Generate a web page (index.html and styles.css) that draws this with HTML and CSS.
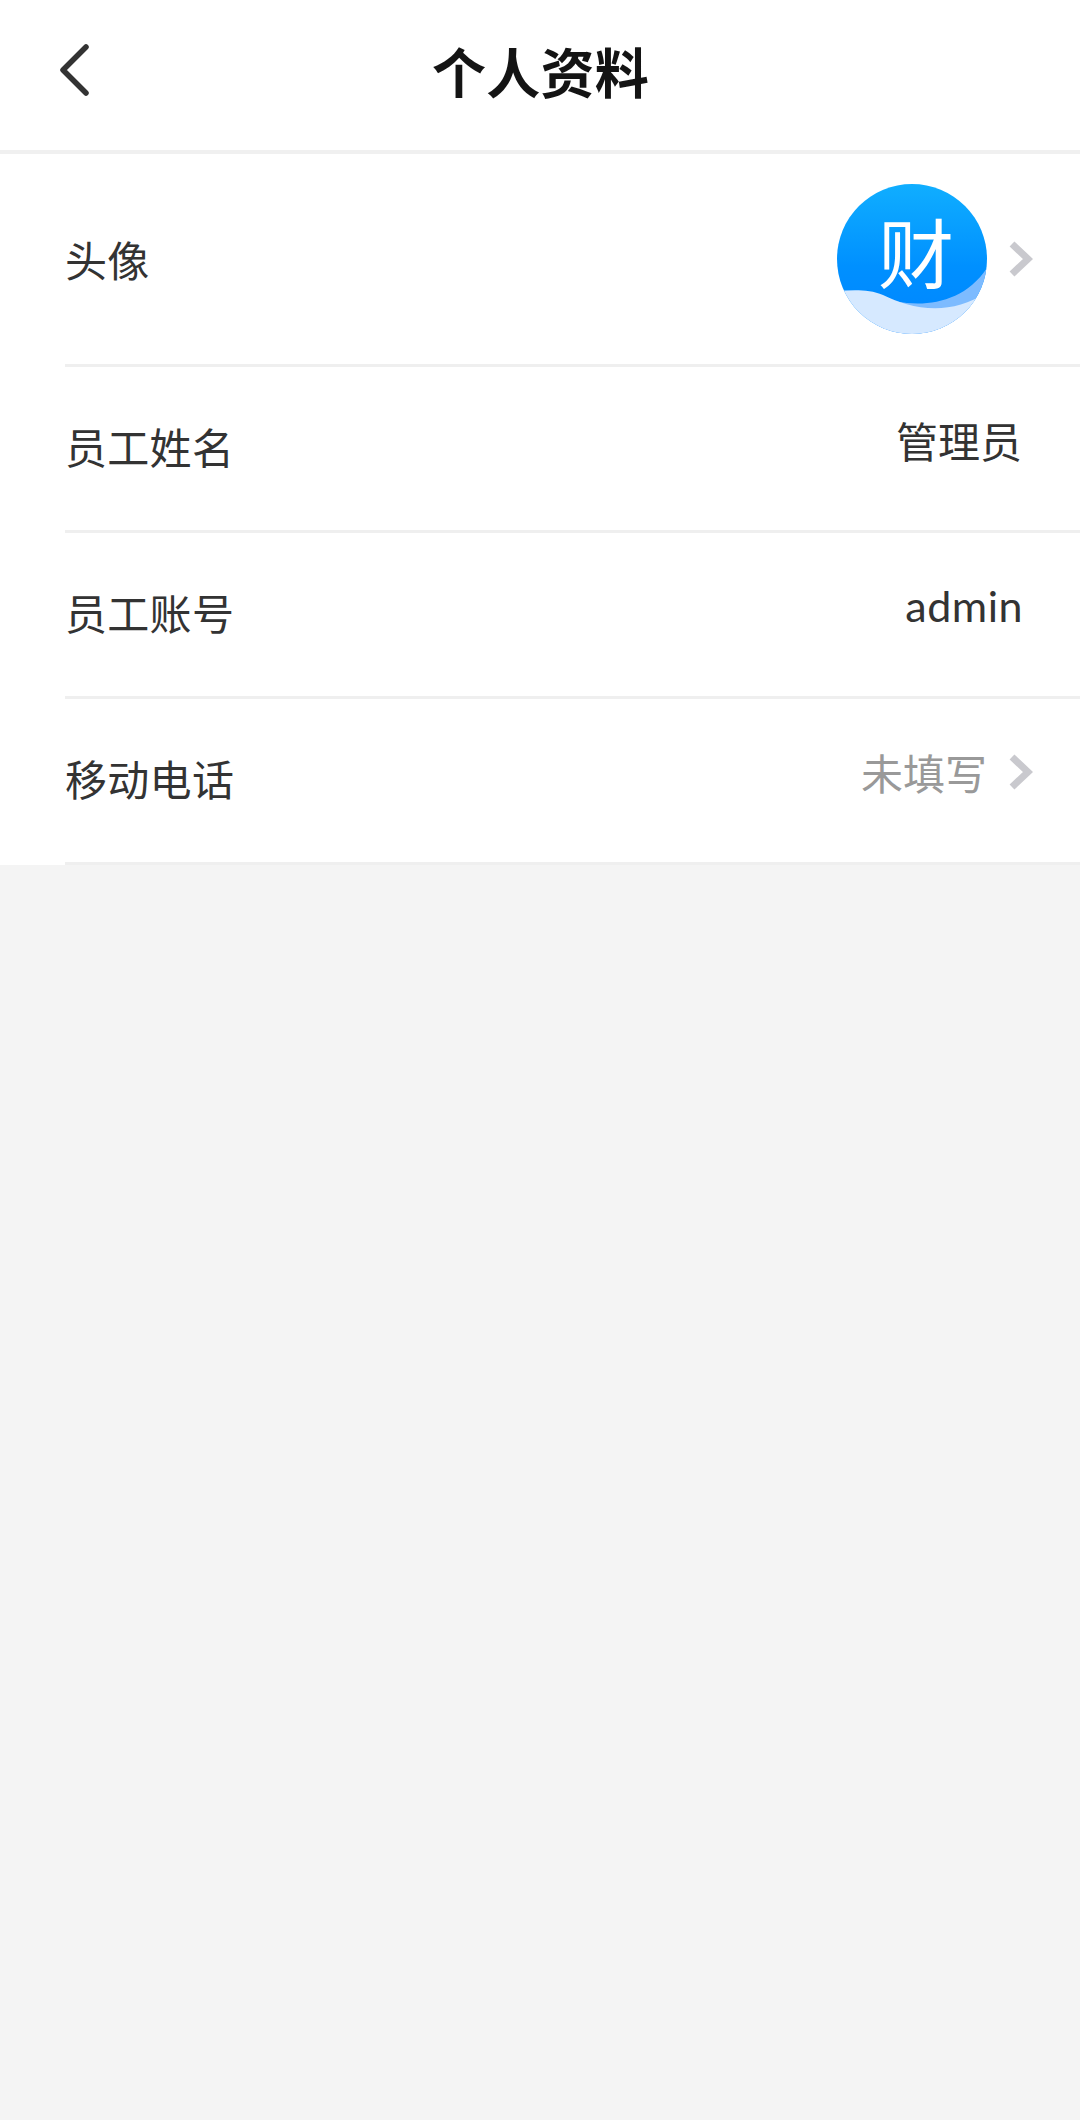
FILE: index.html
```html
<!doctype html>
<html lang="zh-CN">
	<head>
		<meta charset="utf-8" />
		<meta name="viewport" content="width=device-width, initial-scale=1" />
		<title>个人资料</title>
		<link rel="stylesheet" href="styles.css">
	</head>
	<body>
		<header class="nav-bar">
			<svg class="nav-back" width="34" height="54" viewBox="0 0 34 54" aria-hidden="true">
				<path d="M29 5 L6 28 L29 51" />
			</svg>
			<h1 class="nav-title">个人资料</h1>
		</header>
		<main class="profile-list">
			<div class="profile-row profile-row-avatar">
				<span class="profile-label">头像</span>
				<div class="profile-value">
					<svg class="avatar" width="150" height="150" viewBox="0 0 150 150" role="img" aria-label="财">
						<defs>
							<linearGradient id="avatar-bg" x1="0" y1="0" x2="0" y2="1">
								<stop offset="0" stop-color="#10aeff" />
								<stop offset="0.55" stop-color="#0090ff" />
								<stop offset="1" stop-color="#0085ff" />
							</linearGradient>
							<clipPath id="avatar-clip">
								<circle cx="75" cy="75" r="75" />
							</clipPath>
						</defs>
						<g clip-path="url(#avatar-clip)">
							<rect width="150" height="150" fill="url(#avatar-bg)" />
							<path d="M40 112 C72 124 122 126 150 84 V150 H40 Z" fill="#7dbbff" />
							<path d="M0 107 C16 106 32 105 46 111 C72 124 112 134 150 108 V150 H0 Z" fill="#d6e9ff" />
						</g>
						<text class="avatar-text" x="79" y="99" text-anchor="middle">财</text>
					</svg>
					<svg class="chevron" width="24" height="36" viewBox="0 0 24 36" aria-hidden="true">
						<path d="M3 3 L19 18 L3 33" />
					</svg>
				</div>
			</div>
			<div class="profile-row">
				<span class="profile-label">员工姓名</span>
				<div class="profile-value profile-value-text">管理员</div>
			</div>
			<div class="profile-row">
				<span class="profile-label">员工账号</span>
				<div class="profile-value profile-value-text profile-value-latin">admin</div>
			</div>
			<div class="profile-row">
				<span class="profile-label">移动电话</span>
				<div class="profile-value profile-value-empty">
					未填写
					<svg class="chevron" width="24" height="36" viewBox="0 0 24 36" aria-hidden="true">
						<path d="M3 3 L19 18 L3 33" />
					</svg>
				</div>
			</div>
		</main>
	</body>
</html>
```

FILE: styles.css
```css
* {
	box-sizing: border-box;
}

body {
	background-color: #f4f4f4;
	color: #333;
	font-family: "Noto Sans CJK SC", "Noto Sans", sans-serif;
	margin: 0;
	min-height: 2120px;
}

/* Top bar */
.nav-bar {
	align-items: center;
	background-color: #fff;
	border-bottom: 4px solid #f0f0f0;
	display: flex;
	height: 154px;
	justify-content: center;
	position: relative;
}

.nav-back {
	left: 57px;
	position: absolute;
	top: 42px;
}

.nav-back path {
	fill: none;
	stroke: #333;
	stroke-linecap: round;
	stroke-linejoin: round;
	stroke-width: 5.5px;
}

.nav-title {
	color: #141414;
	font-size: 54px;
	font-weight: 700;
	letter-spacing: 0.3px;
	line-height: 1;
	margin: 0 0 9px 1px;
}

/* Rows */
.profile-list {
	background-color: #fff;
	padding-left: 65px;
}

.profile-row {
	align-items: center;
	border-bottom: 3px solid #efefef;
	display: flex;
	height: 166px;
	justify-content: space-between;
	padding-right: 47px;
}

.profile-row-avatar {
	height: 213px;
}

.profile-label {
	font-size: 42px;
	letter-spacing: 0.3px;
	line-height: 1;
	margin-bottom: 5px;
}

.profile-row-avatar .profile-label {
	margin-bottom: 1px;
}

.profile-value {
	align-items: center;
	display: flex;
	margin-bottom: 18px;
}

.profile-row-avatar .profile-value {
	margin-bottom: 0;
}

.profile-value-text {
	font-size: 42px;
	line-height: 1;
	margin-right: 11px;
}

.profile-value-latin {
	font-family: Lato, sans-serif;
	font-size: 43px;
	letter-spacing: 0.5px;
	margin-right: 10px;
}

.profile-value-empty {
	color: #999;
	font-size: 42px;
	line-height: 1;
}

.avatar-text {
	fill: #fff;
	font-family: "Noto Sans CJK SC", sans-serif;
	font-size: 76px;
	font-weight: 400;
}

.chevron {
	margin-left: 22px;
}

.chevron path {
	fill: none;
	stroke: #c9c9ce;
	stroke-width: 7px;
}
```
